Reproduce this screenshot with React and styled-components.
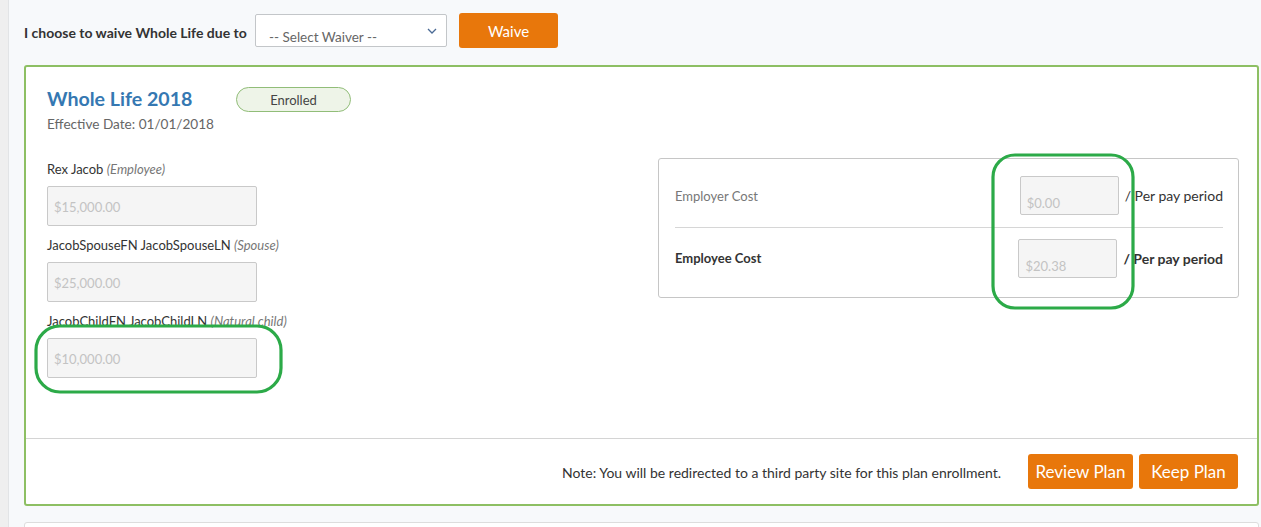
import styled, { createGlobalStyle } from "styled-components";

const Global = createGlobalStyle`
  html, body { margin: 0; padding: 0; background: #f7f9fb; }
  body { font-family: Lato, "Open Sans", sans-serif; color: #333; font-size: 13px; }
  * { box-sizing: border-box; }
`;

const Page = styled.div`
  position: relative;
  height: 527px;
  overflow: hidden;
  border-left: 8px solid #efefef;
  padding-left: 16px;
  padding-right: 2px;
  &::before{
    content: "";
    position: absolute;
    left: 0; top: 0; bottom: 0;
    width: 1px;
    background: #e2e4e6;
  }
`;

const WaiveRow = styled.div`
  display: flex;
  align-items: center;
  height: 48px;
  padding-top: 13px;
  > label{
    font-weight: 700;
    font-size: 14px;
    color: #333;
    width: 231px;
    padding-top: 4px;
  }
`;

const Select = styled.div`
  position: relative;
  width: 192px;
  height: 33px;
  border: 1px solid #c3c6c9;
  border-radius: 2px;
  background: #fff;
  color: #666;
  font-size: 13.5px;
  padding: 14px 0 0 13px;
  margin-right: 12px;
  svg{
    position: absolute;
    right: 9px;
    top: 13px;
  }
`;

const OrangeButton = styled.button`
  background: #e8770b;
  color: #fff;
  border: none;
  border-radius: 3px;
  font-family: Lato, sans-serif;
  font-size: ${(p) => p.$size || 17}px;
  width: ${(p) => p.$w}px;
  height: ${(p) => p.$h}px;
  padding: 0;
  cursor: pointer;
`;

const Card = styled.div`
  margin-top: 17px;
  background: #fff;
  border: 2px solid #8dbf63;
  border-radius: 3px;
  height: 441px;
  display: flex;
  flex-direction: column;
`;

const CardBody = styled.div`
  flex: 1;
  padding: 18px 18px 0 21px;
  border-bottom: 1px solid #d4d4d4;
`;

const TitleRow = styled.div`
  display: flex;
  align-items: center;
  > h2{
    margin: 0;
    font-size: 19.6px;
    font-weight: 700;
    color: #3578b2;
    width: 189px;
  }
`;

const Pill = styled.span`
  display: inline-flex;
  align-items: center;
  justify-content: center;
  width: 115px;
  height: 25px;
  border: 1px solid #91bd78;
  border-radius: 13px;
  background: #eef4e8;
  color: #444;
  font-size: 13px;
  margin-top: 2px;
`;

const Effective = styled.div`
  color: #666;
  font-size: 13.6px;
  margin-top: 4px;
`;

const Columns = styled.div`
  display: flex;
  justify-content: space-between;
  margin-top: 28px;
`;

const Members = styled.div`
  display: flex;
  flex-direction: column;
`;

const MemberLabel = styled.div`
  font-size: 13px;
  line-height: 18px;
  color: #333;
  margin-bottom: 8px;
  margin-top: ${(p) => (p.$first ? 0 : 10)}px;
  i{ color: #777; }
`;

const AmountInput = styled.div`
  width: ${(p) => p.$w || 210}px;
  height: ${(p) => p.$h || 40}px;
  border: 1px solid #c9c9c9;
  border-radius: 2px;
  background: #f5f5f5;
  color: #c3c3c3;
  font-size: 13px;
  padding: ${(p) => p.$pt || 12}px 0 0 6px;
`;

const CostBox = styled.div`
  width: 581px;
  height: 140px;
  border: 1px solid #c6c6c6;
  border-radius: 3px;
  margin-top: -2px;
  padding: 0 15px 0 16px;
  display: flex;
  flex-direction: column;
`;

const CostRow = styled.div`
  flex: 1;
  display: flex;
  align-items: center;
  padding: ${(p) => (p.$divider ? "0 0 8px" : "6px 0 0")};
  border-top: ${(p) => (p.$divider ? "1px solid #d6d6d6" : "none")};
  > span:first-child{
    flex: 1;
    font-size: 13px;
    color: ${(p) => (p.$bold ? "#333" : "#777")};
    font-weight: ${(p) => (p.$bold ? 700 : 400)};
  }
  > span:last-child{
    margin-left: 6px;
    font-size: 14px;
    color: #333;
    font-weight: ${(p) => (p.$bold ? 700 : 400)};
  }
`;

const Footer = styled.div`
  height: 65px;
  display: flex;
  align-items: flex-start;
  justify-content: flex-end;
  padding: 15px 19px 0 0;
  gap: 6px;
  > p{
    margin: 10px 21px 0 0;
    font-size: 14px;
    color: #333;
  }
`;

const NextCard = styled.div`
  margin-top: 16px;
  height: 20px;
  background: #fff;
  border: 1px solid #ddd;
  border-radius: 3px;
`;

const Annotation = styled.svg`
  position: absolute;
  pointer-events: none;
  left: ${(p) => p.$x - 8}px;
  top: ${(p) => p.$y}px;
`;

function Mark({ x, y, w, h, r }) {
  return (
    <Annotation $x={x} $y={y} width={w} height={h}>
      <rect x="2" y="2" width={w - 4} height={h - 4} rx={r} ry={r} fill="none" stroke="#2caa48" strokeWidth="3.2" />
    </Annotation>
  );
}

const members = [
  { name: "Rex Jacob", rel: "Employee", amount: "$15,000.00" },
  { name: "JacobSpouseFN JacobSpouseLN", rel: "Spouse", amount: "$25,000.00" },
  { name: "JacobChildFN JacobChildLN", rel: "Natural child", amount: "$10,000.00" },
];

export default function App() {
  return (
    <>
      <Global />
      <Page>
        <WaiveRow>
          <label>I choose to waive Whole Life due to</label>
          <Select>
            -- Select Waiver --
            <svg width="10" height="6" viewBox="0 0 10 6">
              <path d="M1 1 L5 5 L9 1" fill="none" stroke="#4a6a95" strokeWidth="1.3" />
            </svg>
          </Select>
          <OrangeButton $w={99} $h={35} $size={15}>Waive</OrangeButton>
        </WaiveRow>
        <Card>
          <CardBody>
            <TitleRow>
              <h2>Whole Life 2018</h2>
              <Pill>Enrolled</Pill>
            </TitleRow>
            <Effective>Effective Date: 01/01/2018</Effective>
            <Columns>
              <Members>
                {members.map((m, i) => (
                  <div key={m.name}>
                    <MemberLabel $first={i === 0}>
                      {m.name} <i>({m.rel})</i>
                    </MemberLabel>
                    <AmountInput>{m.amount}</AmountInput>
                  </div>
                ))}
              </Members>
              <CostBox>
                <CostRow>
                  <span>Employer Cost</span>
                  <AmountInput $w={99} $h={39} $pt={18}>$0.00</AmountInput>
                  <span>/ Per pay period</span>
                </CostRow>
                <CostRow $divider $bold>
                  <span>Employee Cost</span>
                  <AmountInput $w={99} $h={39} $pt={18}>$20.38</AmountInput>
                  <span>/ Per pay period</span>
                </CostRow>
              </CostBox>
            </Columns>
          </CardBody>
          <Footer>
            <p>Note: You will be redirected to a third party site for this plan enrollment.</p>
            <OrangeButton $w={105} $h={35}>Review Plan</OrangeButton>
            <OrangeButton $w={99} $h={35}>Keep Plan</OrangeButton>
          </Footer>
        </Card>
        <NextCard />
        <Mark x={34} y={324} w={249} h={70} r={24} />
        <Mark x={991} y={153} w={144} h={157} r={22} />
      </Page>
    </>
  );
}
